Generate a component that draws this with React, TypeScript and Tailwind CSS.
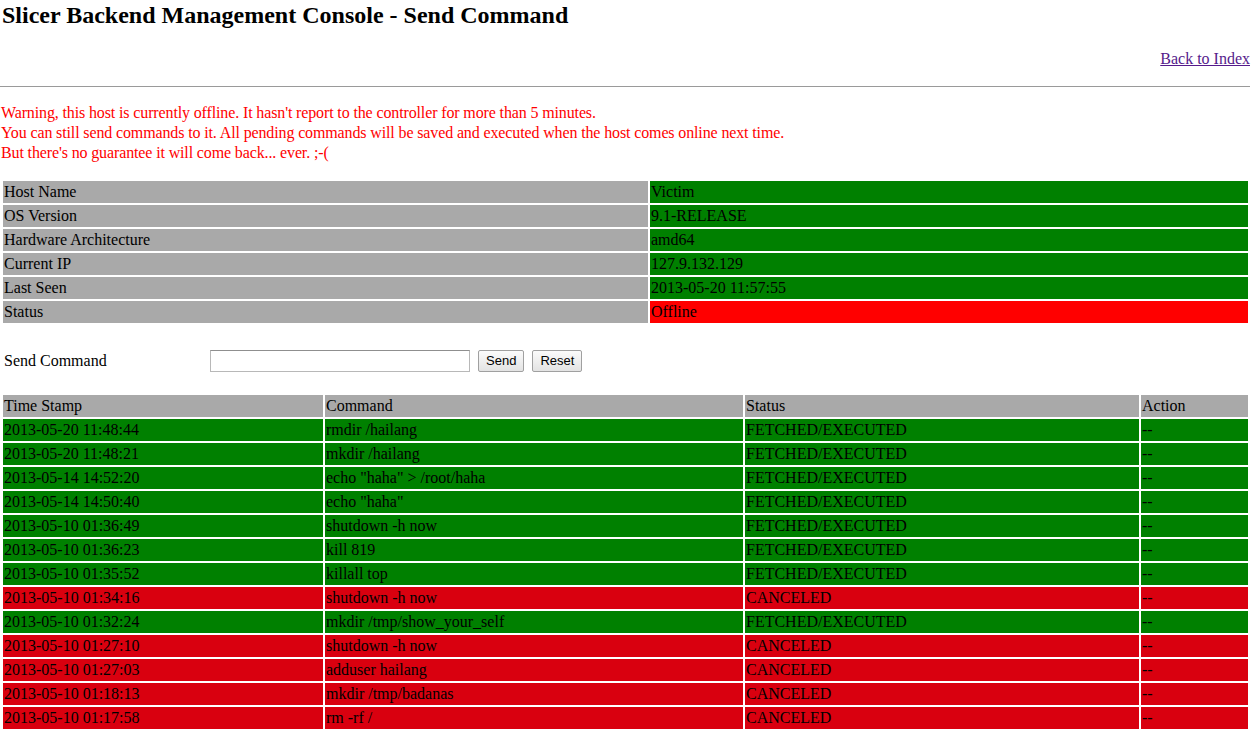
import React from "react";

const hostInfo: { label: string; value: string; offline?: boolean }[] = [
  { label: "Host Name", value: "Victim" },
  { label: "OS Version", value: "9.1-RELEASE" },
  { label: "Hardware Architecture", value: "amd64" },
  { label: "Current IP", value: "127.9.132.129" },
  { label: "Last Seen", value: "2013-05-20 11:57:55" },
  { label: "Status", value: "Offline", offline: true },
];

const history: { ts: string; cmd: string; ok: boolean }[] = [
  { ts: "2013-05-20 11:48:44", cmd: "rmdir /hailang", ok: true },
  { ts: "2013-05-20 11:48:21", cmd: "mkdir /hailang", ok: true },
  { ts: "2013-05-14 14:52:20", cmd: 'echo "haha" > /root/haha', ok: true },
  { ts: "2013-05-14 14:50:40", cmd: 'echo "haha"', ok: true },
  { ts: "2013-05-10 01:36:49", cmd: "shutdown -h now", ok: true },
  { ts: "2013-05-10 01:36:23", cmd: "kill 819", ok: true },
  { ts: "2013-05-10 01:35:52", cmd: "killall top", ok: true },
  { ts: "2013-05-10 01:34:16", cmd: "shutdown -h now", ok: false },
  { ts: "2013-05-10 01:32:24", cmd: "mkdir /tmp/show_your_self", ok: true },
  { ts: "2013-05-10 01:27:10", cmd: "shutdown -h now", ok: false },
  { ts: "2013-05-10 01:27:03", cmd: "adduser hailang", ok: false },
  { ts: "2013-05-10 01:18:13", cmd: "mkdir /tmp/badanas", ok: false },
  { ts: "2013-05-10 01:17:58", cmd: "rm -rf /", ok: false },
];

export default function App() {
  return (
    <div className="min-h-[730px] bg-white text-black font-['Liberation_Serif',serif] text-[16px] pl-[1px] pr-[5px]">
      <h2 className="pt-[1px] pl-[1px] text-[24px] font-bold leading-[28px]">
        Slicer Backend Management Console - Send Command
      </h2>

      <div className="mt-[21px] text-right leading-[18px]">
        <a href="#" className="text-[#551a8b] underline">
          Back to Index
        </a>
      </div>

      <hr className="mt-[18px] -ml-[1px] border-0 border-t border-[#9a9a9a] h-0" />

      <div className="mt-[16px] text-[#ff0000] leading-[20px] tracking-[-0.13px]">
        <div>Warning, this host is currently offline. It hasn't report to the controller for more than 5 minutes.</div>
        <div>You can still send commands to it. All pending commands will be saved and executed when the host comes online next time.</div>
        <div>But there's no guarantee it will come back... ever. ;-(</div>
      </div>

      {/* host info */}
      <table className="mt-[16px] w-full border-separate border-spacing-[2px]">
        <tbody>
          {hostInfo.map((r) => (
            <tr key={r.label}>
              <td className="w-[645px] h-[22px] bg-[#a9a9a9] px-[1px] py-0 leading-[22px]">{r.label}</td>
              <td
                className={`h-[22px] px-[1px] py-0 leading-[22px] ${
                  r.offline ? "bg-[#ff0000]" : "bg-[#008000]"
                }`}
              >
                {r.value}
              </td>
            </tr>
          ))}
        </tbody>
      </table>

      {/* send command */}
      <form className="mt-[24px] flex items-center h-[24px]" onSubmit={(e) => e.preventDefault()}>
        <span className="w-[209px] pl-[3px]">Send Command</span>
        <input
          type="text"
          className="w-[260px] h-[22px] border border-[#b8b8b8] border-t-[#8f8f8f] bg-white px-1 font-['Liberation_Sans',sans-serif] text-[13px]"
        />
        <button
          type="submit"
          className="ml-[8px] h-[22px] px-[7px] border border-[#a0a0a0] rounded-[2px] bg-gradient-to-b from-[#fbfbfb] to-[#e3e3e3] font-['Liberation_Sans',sans-serif] text-[13px] leading-[20px]"
        >
          Send
        </button>
        <button
          type="reset"
          className="ml-[8px] h-[22px] px-[7px] border border-[#a0a0a0] rounded-[2px] bg-gradient-to-b from-[#fbfbfb] to-[#e3e3e3] font-['Liberation_Sans',sans-serif] text-[13px] leading-[20px]"
        >
          Reset
        </button>
      </form>

      {/* command history */}
      <table className="mt-[20px] w-full border-separate border-spacing-[2px]">
        <thead>
          <tr>
            <th className="w-[320px] h-[22px] px-[1px] py-0 text-left font-normal leading-[22px] bg-[#a9a9a9]">Time Stamp</th>
            <th className="w-[418px] h-[22px] px-[1px] py-0 text-left font-normal leading-[22px] bg-[#a9a9a9]">Command</th>
            <th className="w-[394px] h-[22px] px-[1px] py-0 text-left font-normal leading-[22px] bg-[#a9a9a9]">Status</th>
            <th className="h-[22px] px-[1px] py-0 text-left font-normal leading-[22px] bg-[#a9a9a9]">Action</th>
          </tr>
        </thead>
        <tbody>
          {history.map((r, i) => {
            const bg = r.ok ? "bg-[#008000]" : "bg-[#d9000f]";
            return (
              <tr key={i}>
                <td className={`h-[22px] px-[1px] py-0 leading-[22px] ${bg}`}>{r.ts}</td>
                <td className={`h-[22px] px-[1px] py-0 leading-[22px] ${bg}`}>{r.cmd}</td>
                <td className={`h-[22px] px-[1px] py-0 leading-[22px] ${bg}`}>
                  {r.ok ? "FETCHED/EXECUTED" : "CANCELED"}
                </td>
                <td className={`h-[22px] px-[1px] py-0 leading-[22px] ${bg}`}>--</td>
              </tr>
            );
          })}
        </tbody>
      </table>
    </div>
  );
}
